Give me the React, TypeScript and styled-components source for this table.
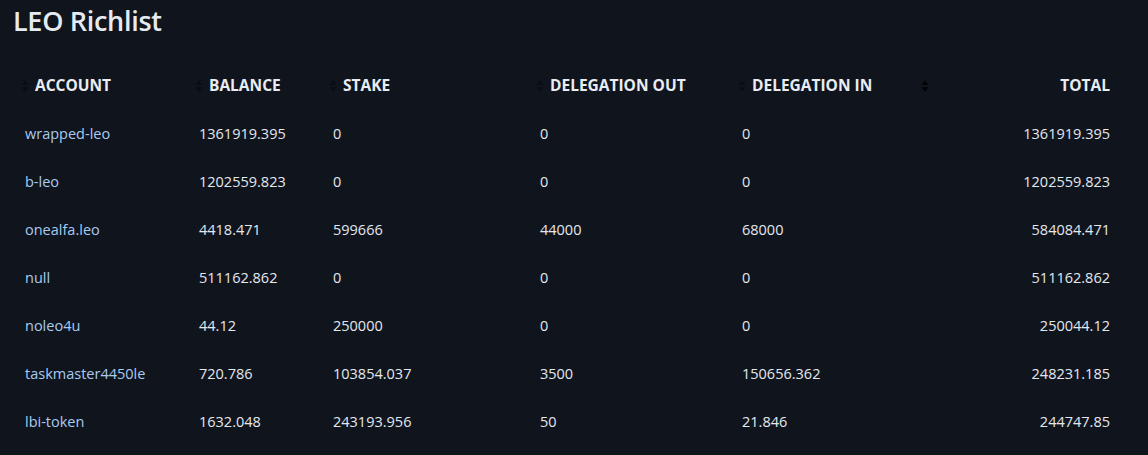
import styled, { createGlobalStyle } from 'styled-components'

type Holder = {
  account: string;
  balance: string;
  stake: string;
  delegationOut: string;
  delegationIn: string;
  total: string;
}

const holders: Holder[] = [
  { account: 'wrapped-leo', balance: '1361919.395', stake: '0', delegationOut: '0', delegationIn: '0', total: '1361919.395' },
  { account: 'b-leo', balance: '1202559.823', stake: '0', delegationOut: '0', delegationIn: '0', total: '1202559.823' },
  { account: 'onealfa.leo', balance: '4418.471', stake: '599666', delegationOut: '44000', delegationIn: '68000', total: '584084.471' },
  { account: 'null', balance: '511162.862', stake: '0', delegationOut: '0', delegationIn: '0', total: '511162.862' },
  { account: 'noleo4u', balance: '44.12', stake: '250000', delegationOut: '0', delegationIn: '0', total: '250044.12' },
  { account: 'taskmaster4450le', balance: '720.786', stake: '103854.037', delegationOut: '3500', delegationIn: '150656.362', total: '248231.185' },
  { account: 'lbi-token', balance: '1632.048', stake: '243193.956', delegationOut: '50', delegationIn: '21.846', total: '244747.85' },
]

const columns = [
  { label: 'Account', width: 174, right: false },
  { label: 'Balance', width: 134, right: false },
  { label: 'Stake', width: 207, right: false },
  { label: 'Delegation Out', width: 202, right: false },
  { label: 'Delegation In', width: 183, right: false },
  { label: 'Total', width: 209, right: true },
]

export default function App() {
  return (
    <Page>
      <GlobalStyle />
      <Title>LEO Richlist</Title>
      <Table>
        <colgroup>
          {columns.map(c => <col key={c.label} style={{ width: c.width }} />)}
        </colgroup>
        <thead>
          <tr>
            {columns.map((c, i) => (
              <HeadCell key={c.label} $right={c.right}>
                <SortIcon $active={i === 5} />
                {c.label}
              </HeadCell>
            ))}
          </tr>
        </thead>
        <tbody>
          {holders.map(h => (
            <tr key={h.account}>
              <Cell><AccountLink href="#">{h.account}</AccountLink></Cell>
              <Cell>{h.balance}</Cell>
              <Cell>{h.stake}</Cell>
              <Cell>{h.delegationOut}</Cell>
              <Cell>{h.delegationIn}</Cell>
              <Cell $right>{h.total}</Cell>
            </tr>
          ))}
        </tbody>
      </Table>
    </Page>
  )
}

// little up/down caret shown before each header label
const SortIcon = ({ $active }: { $active?: boolean }) => (
  <SortSvg width="8" height="14" viewBox="0 0 8 14" $active={$active}>
    <path d="M4 1 L7.5 6 L0.5 6 Z" />
    <path d="M4 13 L7.5 8 L0.5 8 Z" />
  </SortSvg>
)

const GlobalStyle = createGlobalStyle`
  html, body {
    margin: 0;
    padding: 0;
    background: #10141d;
  }
  body {
    font-family: "Open Sans", "Noto Sans", sans-serif;
    color: #e3e8ef;
  }
`

const Page = styled.div`
  padding: 0 13px;
  min-height: 455px;
  background: #10141d;
`

const Title = styled.h1`
  margin: 0;
  padding-top: 3px;
  height: 58px;
  font-size: 27px;
  font-weight: 600;
  line-height: 36px;
  color: #e6ebf2;
  letter-spacing: -0.3px;
`

const Table = styled.table`
  width: 1109px;
  border-collapse: collapse;
  table-layout: fixed;
`

const HeadCell = styled.th<{ $right?: boolean }>`
  position: relative;
  height: 48px;
  padding: 0 12px 0 22px;
  text-align: ${p => (p.$right ? 'right' : 'left')};
  font-size: 15.5px;
  font-weight: 700;
  text-transform: uppercase;
  color: #e8edf3;
  white-space: nowrap;
`

const SortSvg = styled.svg<{ $active?: boolean }>`
  position: absolute;
  left: 8px;
  top: 18px;
  fill: ${p => (p.$active ? '#030407' : '#0a0d13')};
`

const Cell = styled.td<{ $right?: boolean }>`
  height: 48px;
  padding: 0 12px;
  font-size: 14.5px;
  text-align: ${p => (p.$right ? 'right' : 'left')};
  color: #e3e8ef;
  white-space: nowrap;
`

const AccountLink = styled.a`
  color: #a9cbf0;
  text-decoration: none;
`
